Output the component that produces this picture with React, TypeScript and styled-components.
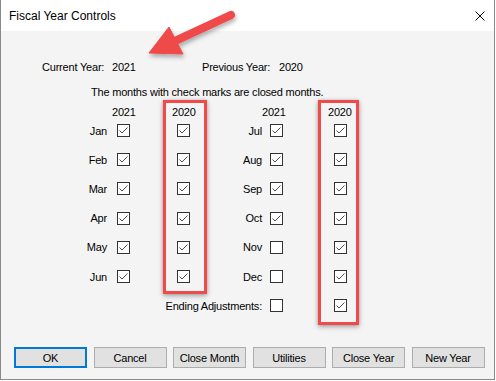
import styled, { createGlobalStyle } from "styled-components";

const GlobalStyle = createGlobalStyle`
  html, body {
    margin: 0;
    padding: 0;
    background: #ffffff;
  }
  * {
    box-sizing: border-box;
  }
`;

interface MonthRow {
  label: string;
  current: boolean;
  previous: boolean;
}

const leftRows: MonthRow[] = [
  { label: "Jan", current: true, previous: true },
  { label: "Feb", current: true, previous: true },
  { label: "Mar", current: true, previous: true },
  { label: "Apr", current: true, previous: true },
  { label: "May", current: true, previous: true },
  { label: "Jun", current: true, previous: true },
];

const rightRows: MonthRow[] = [
  { label: "Jul", current: true, previous: true },
  { label: "Aug", current: true, previous: true },
  { label: "Sep", current: true, previous: true },
  { label: "Oct", current: true, previous: true },
  { label: "Nov", current: false, previous: true },
  { label: "Dec", current: false, previous: true },
  { label: "Ending Adjustments:", current: false, previous: true },
];

const buttons = ["OK", "Cancel", "Close Month", "Utilities", "Close Year", "New Year"];

const CheckBox = ({ checked }: { checked: boolean }) => (
  <Box>
    {checked && (
      <svg width="11" height="11" viewBox="0 0 11 11">
        <polyline points="1.5,5.5 4,8 9.5,2.5" fill="none" stroke="#505050" strokeWidth="1" />
      </svg>
    )}
  </Box>
);

const MonthGroup = ({
  rows,
  labelWidth,
  labelGap,
  yearGap,
  checkInset,
  boxGap,
  boxWidth,
  boxPad,
  boxInset,
  boxBottom,
}: {
  rows: MonthRow[];
  labelWidth: number;
  labelGap: number;
  yearGap: number;
  checkInset: number;
  boxGap: number;
  boxWidth: number;
  boxPad: number;
  boxInset: number;
  boxBottom: number;
}) => (
  <Group>
    <LabelCol $width={labelWidth} $ml={labelGap}>
      <HeadCell />
      {rows.map((r) => (
        <LabelCell key={r.label}>{r.label}</LabelCell>
      ))}
    </LabelCol>
    <YearCol $ml={yearGap}>
      <HeadCell>2021</HeadCell>
      {rows.map((r) => (
        <CheckCell key={r.label} $inset={checkInset}>
          <CheckBox checked={r.current} />
        </CheckCell>
      ))}
    </YearCol>
    <Highlight $ml={boxGap} $width={boxWidth} $pad={boxPad} $bottom={boxBottom}>
      <HeadCell>2020</HeadCell>
      {rows.map((r) => (
        <CheckCell key={r.label} $inset={boxInset}>
          <CheckBox checked={r.previous} />
        </CheckCell>
      ))}
    </Highlight>
  </Group>
);

const App = () => {
  return (
    <>
      <GlobalStyle />
      <Window>
        <TitleBar>
          <Title>Fiscal Year Controls</Title>
          <CloseIcon width="10" height="10" viewBox="0 0 10 10">
            <path d="M0.5 0.5 L9.5 9.5 M9.5 0.5 L0.5 9.5" stroke="#000" strokeWidth="1" />
          </CloseIcon>
        </TitleBar>

        <Client>
          <YearRow>
            <YearLabel $width={70}>Current Year:</YearLabel>
            <YearLabel $width={90}>2021</YearLabel>
            <YearLabel $width={77}>Previous Year:</YearLabel>
            <YearLabel $width={40}>2020</YearLabel>
          </YearRow>

          <Caption>The months with check marks are closed months.</Caption>

          <MonthsArea>
            <MonthGroup
              rows={leftRows}
              labelWidth={50}
              labelGap={0}
              yearGap={5}
              checkInset={5}
              boxGap={23}
              boxWidth={44}
              boxPad={6}
              boxInset={5}
              boxBottom={0}
            />
            <MonthGroup
              rows={rightRows}
              labelWidth={37}
              labelGap={18}
              yearGap={0}
              checkInset={8}
              boxGap={28}
              boxWidth={41}
              boxPad={7}
              boxInset={6}
              boxBottom={2}
            />
          </MonthsArea>

          <ButtonRow>
            {buttons.map((b, i) => (
              <DialogButton key={b} $primary={i === 0}>
                {b}
              </DialogButton>
            ))}
          </ButtonRow>
        </Client>

        <Arrow width="260" height="70" viewBox="0 0 260 70">
          <defs>
            <filter id="arrowShadow" x="-20%" y="-20%" width="140%" height="160%">
              <feDropShadow dx="1" dy="3" stdDeviation="2" floodColor="#000" floodOpacity="0.3" />
            </filter>
          </defs>
          <g filter="url(#arrowShadow)" fill="#f04a4a" stroke="#f04a4a">
            <line x1="230" y1="15" x2="174" y2="41" strokeWidth="8" strokeLinecap="round" />
            <polygon points="148,53 182,54 168,27" strokeWidth="1" strokeLinejoin="round" />
          </g>
        </Arrow>
      </Window>
    </>
  );
};

const Window = styled.div`
  position: relative;
  width: 495px;
  height: 380px;
  border: 1px solid #8a8a8a;
  border-top: none;
  background: #f4f4f4;
  display: flex;
  flex-direction: column;
  font-family: "Liberation Sans", Arial, sans-serif;
  font-size: 11px;
  letter-spacing: -0.2px;
  color: #000;
`;

const TitleBar = styled.div`
  height: 31px;
  flex-shrink: 0;
  background: #ffffff;
  display: flex;
  align-items: center;
  justify-content: space-between;
  padding: 0 8px 0 8px;
`;

const Title = styled.div`
  font-family: "Liberation Sans", Arial, sans-serif;
  font-size: 12px;
  letter-spacing: 0;
  padding-top: 1px;
`;

const CloseIcon = styled.svg`
  margin-right: 1px;
  display: block;
`;

const Client = styled.div`
  flex: 1;
  display: flex;
  flex-direction: column;
  padding: 30px 0 11px 0;
`;

const YearRow = styled.div`
  display: flex;
  padding-left: 41px;
  line-height: 13px;
`;

const YearLabel = styled.div<{ $width: number }>`
  width: ${(p) => p.$width}px;
  white-space: nowrap;
`;

const Caption = styled.div`
  margin-top: 12px;
  padding-left: 90px;
  line-height: 13px;
  white-space: nowrap;
`;

const MonthsArea = styled.div`
  display: flex;
  align-items: flex-start;
  margin-top: 1px;
  padding-left: 56px;
`;

const Group = styled.div`
  display: flex;
  align-items: flex-start;
`;

const LabelCol = styled.div<{ $width: number; $ml: number }>`
  width: ${(p) => p.$width}px;
  margin-left: ${(p) => p.$ml}px;
  padding-top: 3px;
  display: flex;
  flex-direction: column;
  align-items: flex-end;
`;

const HeadCell = styled.div`
  height: 13px;
  line-height: 19px;
  white-space: nowrap;
`;

const LabelCell = styled.div`
  height: 29.2px;
  display: flex;
  align-items: center;
  justify-content: flex-end;
  white-space: nowrap;
`;

const YearCol = styled.div<{ $ml: number }>`
  width: 28px;
  margin-left: ${(p) => p.$ml}px;
  padding-top: 3px;
  display: flex;
  flex-direction: column;
`;

const Highlight = styled.div<{ $ml: number; $width: number; $pad: number; $bottom: number }>`
  width: ${(p) => p.$width}px;
  margin-left: ${(p) => p.$ml}px;
  padding-left: ${(p) => p.$pad}px;
  padding-bottom: ${(p) => p.$bottom}px;
  border: 3px solid #f04a4a;
  box-shadow: 0 2px 5px rgba(0, 0, 0, 0.3), 0 0 3px rgba(0, 0, 0, 0.15);
  display: flex;
  flex-direction: column;
`;

const CheckCell = styled.div<{ $inset: number }>`
  height: 29.2px;
  display: flex;
  align-items: center;
  padding-left: ${(p) => p.$inset}px;
`;

const Box = styled.span`
  width: 13px;
  height: 13px;
  border: 1px solid #333;
  background: #ffffff;
  display: flex;
  align-items: center;
  justify-content: center;
`;

const ButtonRow = styled.div`
  margin-top: auto;
  display: flex;
  gap: 6.5px;
  padding-left: 13px;
`;

const DialogButton = styled.button<{ $primary?: boolean }>`
  width: 73px;
  height: 21px;
  padding: 0;
  background: #e1e1e1;
  border: ${(p) => (p.$primary ? "2px solid #0078d7" : "1px solid #adadad")};
  border-radius: 0;
  font-family: "Liberation Sans", Arial, sans-serif;
  font-size: 11px;
  letter-spacing: -0.2px;
  color: #000;
`;

const Arrow = styled.svg`
  position: absolute;
  left: 0;
  top: 0;
  pointer-events: none;
  overflow: visible;
`;

export default App;
